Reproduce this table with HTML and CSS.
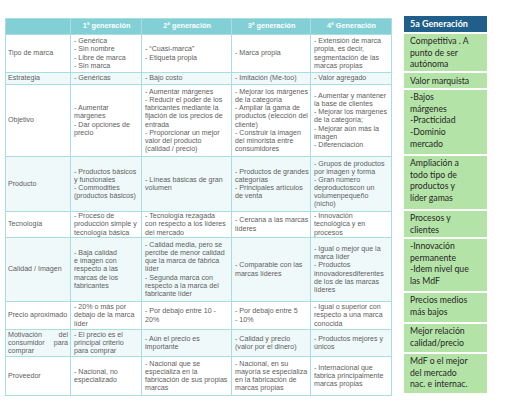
FILE: index.html
```html
<!DOCTYPE html>
<html lang="es">
<head>
<meta charset="utf-8">
<title>Generaciones de marcas</title>
<link rel="stylesheet" href="styles.css">
</head>
<body>
<div class="page">
  <table class="gen">
    <colgroup>
      <col class="c0"><col class="c1"><col class="c2"><col class="c3"><col class="c4">
    </colgroup>
    <thead>
      <tr class="rh">
        <th></th>
        <th>1ª generación</th>
        <th>2ª generación</th>
        <th>3ª generación</th>
        <th>4ª Generación</th>
      </tr>
    </thead>
    <tbody>
      <tr class="r-tipo">
        <td class="lab">Tipo de marca</td>
        <td>- Genérica<br>- Sin nombre<br>- Libre de marca<br>- Sin marca</td>
        <td>- “Cuasi-marca”<br>- Etiqueta propia</td>
        <td>- Marca propia</td>
        <td>- Extensión de marca<br>propia, es decir,<br>segmentación de las<br>marcas propias</td>
      </tr>
      <tr class="r-estr tint">
        <td class="lab">Estrategia</td>
        <td>- Genéricas</td>
        <td>- Bajo costo</td>
        <td>- Imitación (Me-too)</td>
        <td>- Valor agregado</td>
      </tr>
      <tr class="r-obj">
        <td class="lab">Objetivo</td>
        <td>- Aumentar<br>márgenes<br>- Dar opciones de<br>precio</td>
        <td>- Aumentar márgenes<br>- Reducir el poder de los<br>fabricantes mediante la<br>fijación de los precios de<br>entrada<br>- Proporcionar un mejor<br>valor del producto<br>(calidad / precio)</td>
        <td>- Mejorar los márgenes<br>de la categoría<br>- Ampliar la gama de<br>productos (elección del<br>cliente)<br>- Construir la imagen<br>del minorista entre<br>consumidores</td>
        <td>- Aumentar y mantener<br>la base de clientes<br>- Mejorar los márgenes<br>de la categoría;<br>- Mejorar aún más la<br>imagen<br>- Diferenciación</td>
      </tr>
      <tr class="r-prod tint">
        <td class="lab">Producto</td>
        <td>- Productos básicos<br>y funcionales<br>- Commodities<br>(productos básicos)</td>
        <td>- Líneas básicas de gran<br>volumen</td>
        <td>- Productos de grandes<br>categorías<br>- Principales artículos<br>de venta</td>
        <td>- Grupos de productos<br>por imagen y forma<br>- Gran número<br>deproductoscon un<br>volumenpequeño<br>(nicho)</td>
      </tr>
      <tr class="r-tec">
        <td class="lab">Tecnología</td>
        <td>- Proceso de<br>producción simple y<br>tecnología básica</td>
        <td>- Tecnología rezagada<br>con respecto a los líderes<br>del mercado</td>
        <td>- Cercana a las marcas<br>líderes</td>
        <td>- Innovación<br>tecnológica y en<br>procesos</td>
      </tr>
      <tr class="r-cal tint">
        <td class="lab">Calidad / Imagen</td>
        <td>- Baja calidad<br>e imagen con<br>respecto a las<br>marcas de los<br>fabricantes</td>
        <td>- Calidad media, pero se<br>percibe de menor calidad<br>que la marca de fábrica<br>líder<br>- Segunda marca con<br>respecto a la marca del<br>fabricante líder</td>
        <td>- Comparable con las<br>marcas líderes</td>
        <td>- Igual o mejor que la<br>marca líder<br>- Productos<br>innovadoresdiferentes<br>de los de las marcas<br>líderes</td>
      </tr>
      <tr class="r-pre">
        <td class="lab">Precio aproximado</td>
        <td>- 20% o más por<br>debajo de la marca<br>líder</td>
        <td>- Por debajo entre 10 -<br>20%</td>
        <td>- Por debajo entre 5<br>- 10%</td>
        <td>- Igual o superior con<br>respecto a una marca<br>conocida</td>
      </tr>
      <tr class="r-mot tint">
        <td class="lab just">Motivación del consumidor para comprar</td>
        <td>- El precio es el<br>principal criterio<br>para comprar</td>
        <td>- Aún el precio es<br>importante</td>
        <td>- Calidad y precio<br>(valor por el dinero)</td>
        <td>- Productos mejores y<br>únicos</td>
      </tr>
      <tr class="r-prov">
        <td class="lab">Proveedor</td>
        <td>- Nacional, no<br>especializado</td>
        <td>- Nacional que se<br>especializa en la<br>fabricación de sus propias<br>marcas</td>
        <td>- Nacional, en su<br>mayoría se especializa<br>en la fabricación de<br>marcas propias</td>
        <td>- Internacional que<br>fabrica principalmente<br>marcas propias</td>
      </tr>
    </tbody>
  </table>

  <div class="fifth">
    <div class="f-head">5a Generación</div>
    <div class="f-cell f1">Competitiva . A<br>punto de ser<br>autónoma</div>
    <div class="f-cell f2">Valor marquista</div>
    <div class="f-cell f3">-Bajos<br>márgenes<br>-Practicidad<br>-Dominio<br>mercado</div>
    <div class="f-cell f4">Ampliación a<br>todo tipo de<br>productos y<br>líder gamas</div>
    <div class="f-cell f5">Procesos y<br>clientes</div>
    <div class="f-cell f6">-Innovación<br>permanente<br>-Idem nivel que<br>las MdF</div>
    <div class="f-cell f7">Precios medios<br>más bajos</div>
    <div class="f-cell f8">Mejor relación<br>calidad/precio</div>
    <div class="f-cell f9">MdF o el mejor<br>del mercado<br>nac. e internac.</div>
  </div>
</div>
</body>
</html>
```

FILE: styles.css
```css
html, body {
  margin: 0;
  padding: 0;
  background: #ffffff;
}

.page {
  display: flex;
  align-items: flex-start;
  gap: 12px;
  padding: 16px 0 0 5px;
}

/* ---------- left comparison table ---------- */
.gen {
  margin-top: 2px;
  width: 386px;
  table-layout: fixed;
  border-collapse: collapse;
  font-family: "Liberation Sans", Arial, sans-serif;
  font-size: 7.1px;
  line-height: 8.1px;
  color: #5e5e5e;
}

.c0 { width: 65px; }
.c1 { width: 71px; }
.c2 { width: 90px; }
.c3 { width: 79px; }
.c4 { width: 81px; }

.gen th,
.gen td {
  border: 1px solid #a9dde1;
  padding: 0 2px 0 3px;
  vertical-align: middle;
  text-align: left;
  white-space: nowrap;
  overflow: hidden;
}

.gen th {
  background: #82cfd5;
  color: #ffffff;
  font-weight: bold;
  text-align: center;
  font-size: 7.3px;
}

.gen td.lab {
  padding-left: 2px;
}

.gen td.just {
  white-space: normal;
  text-align: justify;
  text-align-last: left;
}

.gen tr.tint td {
  background: #eff9fa;
}

.rh     { height: 16px; }
.r-tipo { height: 38px; }
.r-estr { height: 12px; }
.r-obj  { height: 72px; }
.r-prod { height: 55px; }
.r-tec  { height: 26px; }
.r-cal  { height: 64px; }
.r-pre  { height: 28px; }
.r-mot  { height: 27px; }
.r-prov { height: 39px; }

/* ---------- right "5a Generación" column ---------- */
.fifth {
  width: 83px;
  display: flex;
  flex-direction: column;
  gap: 2px;
  font-family: "Lato", "Liberation Sans", sans-serif;
  font-size: 8.7px;
  line-height: 11.7px;
}

.f-head {
  height: 16px;
  background: #1f5f8a;
  color: #ffffff;
  font-weight: bold;
  font-size: 9px;
  line-height: 16px;
  padding-left: 6px;
}

.f-cell {
  background: #b4e3a7;
  color: #262626;
  padding: 1px 0 0 6px;
  box-sizing: border-box;
}

.f1 { height: 37px; }
.f2 { height: 15px; line-height: 14px; }
.f3 { height: 64px; }
.f4 { height: 53px; }
.f5 { height: 26px; }
.f6 { height: 52px; }
.f7 { height: 29px; }
.f8 { height: 28px; }
.f9 { height: 39px; }
```
